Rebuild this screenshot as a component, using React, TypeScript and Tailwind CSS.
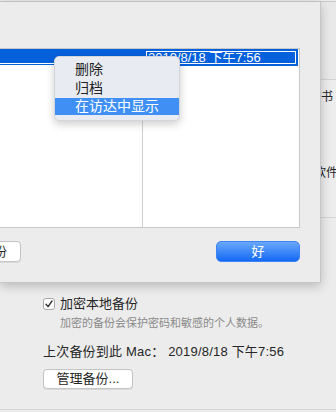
import React from "react";

export default function App() {
  return (
    <div className="relative w-[336px] h-[412px] overflow-hidden bg-[#ececec] text-[#262626] font-['Liberation_Sans','Noto_Sans_CJK_SC',sans-serif]">
      {/* background window content */}
      <div className="flex flex-col">
        <div className="h-px mt-px bg-[#c9c9c9]" />
        <div className="h-[77px] bg-[#e9e9e9]" />
        <div className="h-px bg-[#d4d4d4]" />
        <div className="h-[137px] flex flex-col bg-[#ededed]">
          <div className="pt-[10px] pl-[309px] text-[12px] leading-[14px] whitespace-nowrap">证书</div>
          <div className="mt-[62px] pl-[314px] text-[12px] leading-[14px] whitespace-nowrap">软件</div>
        </div>
        <div className="h-px bg-[#d4d4d4]" />
        <div className="mt-[78px] pl-[43px] flex items-center h-[16px] gap-[5px]">
          <div className="w-[12px] h-[12px] rounded-[3px] border border-[#a9a9a9] bg-white flex items-center justify-center">
            <svg width="10" height="10" viewBox="0 0 10 10">
              <path d="M2 5.2 L4.1 7.6 L8 2" fill="none" stroke="#333" strokeWidth="1.4" strokeLinecap="round" strokeLinejoin="round" />
            </svg>
          </div>
          <span className="text-[13px] leading-[16px]">加密本地备份</span>
        </div>
        <div className="mt-[4px] pl-[60px] text-[11px] leading-[14px] text-[#8a8a8a] whitespace-nowrap">
          加密的备份会保护密码和敏感的个人数据。
        </div>
        <div className="mt-[14px] pl-[43px] text-[13px] leading-[16px] whitespace-nowrap tracking-[0.2px]">
          上次备份到此 Mac： 2019/8/18 下午7:56
        </div>
        <div className="mt-[9px] pl-[43px] flex">
          <div className="w-[90px] h-[20px] rounded-[4px] bg-white border border-[#c4c4c4] shadow-[0_1px_0_rgba(0,0,0,0.08)] flex items-center justify-center text-[13px] leading-[16px]">
            管理备份...
          </div>
        </div>
        <div className="mt-[20px] h-px bg-[#d6d6d6]" />
      </div>

      {/* sheet overlay */}
      <div className="absolute left-0 top-[2px] w-[321px] h-[281px] bg-[#ececec] border-r border-b border-[#c6c6c6] shadow-[0_3px_10px_rgba(0,0,0,0.22)] flex flex-col">
        <div className="pt-[46px]">
          <div className="w-[300px] h-[180px] bg-white border-t border-r border-b border-[#c8c8c8] flex flex-col">
            <div className="flex h-[17px]">
              <div className="w-[144px] flex flex-col">
                <div className="h-[14px] bg-[#0560dc]" />
                <div className="h-px bg-white" />
                <div className="h-px bg-[#0560dc]" />
              </div>
              <div className="flex-1 mr-px border-2 border-[#0560dc] bg-white p-px">
                <div className="h-full bg-[#0560dc] text-white text-[13px] leading-[11px] whitespace-nowrap pl-px">
                  2019/8/18 下午7:56
                </div>
              </div>
            </div>
            <div className="flex-1 flex">
              <div className="w-[143px] border-r border-[#d0d0d0]" />
              <div className="flex-1" />
            </div>
          </div>
        </div>
        <div className="mt-[13px] w-[300px] flex justify-between">
          <div className="-ml-[40px] w-[61px] h-[21px] rounded-[4px] bg-white border border-[#c4c4c4] shadow-[0_1px_0_rgba(0,0,0,0.08)] flex items-center justify-end pr-[13px] text-[13px] leading-[16px]">
            备份
          </div>
          <div className="w-[84px] h-[21px] rounded-[5px] bg-[linear-gradient(#6aa8fb,#1469f4)] border border-[#3d84f5] flex items-center justify-center text-white text-[13px] leading-[16px]">
            好
          </div>
        </div>
      </div>

      {/* context menu */}
      <div className="absolute left-[54px] top-[56px] w-[126px] h-[65px] rounded-[5px] bg-[#e8ecf2] border border-[#d2d5da] shadow-[0_3px_8px_rgba(0,0,0,0.2)] pt-[3px] flex flex-col text-[14px] leading-[18px]">
        <div className="h-[19px] pl-[20px] text-[#222]">删除</div>
        <div className="h-[19px] pl-[20px] text-[#222]">归档</div>
        <div className="h-[17px] pl-[20px] bg-[#3f8ff5] text-white leading-[17px]">在访达中显示</div>
      </div>
    </div>
  );
}
